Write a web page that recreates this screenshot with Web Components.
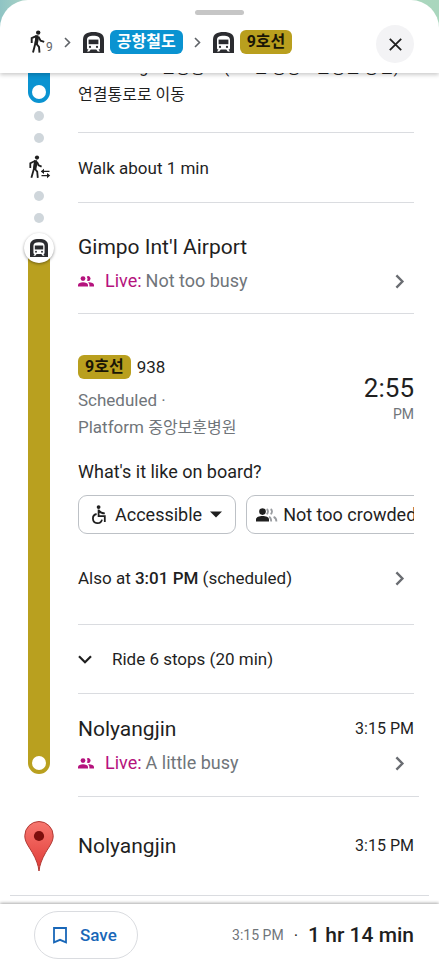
<!DOCTYPE html>
<html lang="en">
<head>
<meta charset="utf-8">
<meta name="viewport" content="width=device-width, initial-scale=1">
<title>Transit directions</title>
<style>
  html, body { margin: 0; height: 100%; }
  body {
    font-family: Roboto, "Noto Sans CJK KR", sans-serif;
    font-size: 17px;
    line-height: 27px;
    color: #1f1f1f;
    background: #fff;
  }
</style>
</head>
<body>
<trip-sheet>
  <route-header slot="header">
    <ui-icon name="walk"></ui-icon><small>9</small>
    <ui-icon class="sep" name="next"></ui-icon>
    <ui-icon name="train"></ui-icon><line-badge tone="blue">공항철도</line-badge>
    <ui-icon class="sep" name="next"></ui-icon>
    <ui-icon name="train"></ui-icon><line-badge>9호선</line-badge>
  </route-header>

  <trip-leg kind="transfer">
    <plain-step lang="ko">Go through 환승통로 (9호선 중앙보훈병원 방면)<br>연결통로로 이동</plain-step>
    <walk-step>Walk about 1 min</walk-step>
  </trip-leg>

  <trip-leg kind="ride">
    <station-stop name="Gimpo Int'l Airport" live="Not too busy"></station-stop>
    <departure-info number="938" status="Scheduled ·" platform="중앙보훈병원" time="2:55" half="PM" also="3:01 PM">
      <line-badge slot="badge">9호선</line-badge>
      <filter-chip slot="chips" icon="wheelchair">Accessible</filter-chip>
      <filter-chip slot="chips" icon="crowd">Not too crowded</filter-chip>
    </departure-info>
    <ride-stops>Ride 6 stops (20 min)</ride-stops>
    <station-stop name="Nolyangjin" live="A little busy" time="3:15 PM" last></station-stop>
  </trip-leg>

  <trip-leg kind="destination">
    <final-stop name="Nolyangjin" time="3:15 PM"></final-stop>
  </trip-leg>

  <trip-footer slot="footer" arrival="3:15 PM" total="1 hr 14 min"></trip-footer>
</trip-sheet>

<script>
const ICONS = {
  walk: [15, 24, `<circle cx="8.2" cy="2.6" r="2.2" fill="#1f1f1f"/><path d="M6.6 5.8 1.7 8.2V13M6.6 6.2 5.2 14.2M5.4 13.2 3 22.6M5.8 13.2l3.2 3.6.5 5.8M8.4 6.6l2.2 4 3.6 1.2" fill="none" stroke="#1f1f1f" stroke-width="1.9"/><path d="M5.6 5.2h2.8l.4 3.6-1 5.2H4.6z" fill="#1f1f1f"/>`],
  transfer: [22, 24, `<circle cx="9" cy="2.6" r="2.1" fill="#1f1f1f"/><path d="M7.4 5.8 2.3 8.2V13M7.2 6 5.8 14M6 13.4 3.4 22.8M6.4 13.2l2.8 3.4.6 6.2M9 6.8l1.6 3.4 3 1.4" fill="none" stroke="#1f1f1f" stroke-width="1.8"/><path d="M6.2 5.2h2.8l.4 3.6-1 5.2H5.2z" fill="#1f1f1f"/><path d="M21.5 16.4h-8M13.5 20.6h7" stroke="#1f1f1f" stroke-width="1.2"/><path d="m16 13.8-3.2 2.6 3.2 2.6zM19 18l3.2 2.6L19 23.2z" fill="#1f1f1f"/>`],
  train: [21, 21, `<path d="M0 21V7.5C0 2.2 4 0 10.5 0S21 2.2 21 7.5V21z" fill="#2b2c30"/><path d="M4 16V8c0-3 2.4-4.2 6.5-4.2S17 5 17 8v8c0 1-.6 1.6-1.5 1.6L17 19.5h-2.2l-1.500-1.900H7.700L6.200 19.500H4l1.500-1.900C4.600 17.600 4 17 4 16z" fill="#fff"/><path d="M5.600 7.600h9.800v4.600H5.600z" fill="#2b2c30"/><circle cx="7" cy="14.900" r="1.100" fill="#2b2c30"/><circle cx="14" cy="14.900" r="1.100" fill="#2b2c30"/>`],
  next: [7, 11, `<path d="m1 1 4.500 4.500L1 10" fill="none" stroke="#5f6368" stroke-width="1.600"/>`],
  right: [10, 15, `<path d="m1.400 1.400 6 6.100-6 6.100" fill="none" stroke="#6a6d72" stroke-width="2.400"/>`],
  down: [14, 9, `<path d="m1 1.200 6 6 6-6" fill="none" stroke="#1f1f1f" stroke-width="2.200"/>`],
  close: [13, 13, `<path d="m.8.800 11.400 11.400M12.200.800.800 12.200" stroke="#1f1f1f" stroke-width="1.800"/>`],
  people: [16, 11, `<g fill="#b5127d"><circle cx="5" cy="2.600" r="2.400"/><path d="M0 10.600V8.900C0 7.100 2.600 6.200 5 6.200s5 .9 5 2.700v1.700z"/><path d="M8.800.600a2.400 2.400 0 1 1 0 4 3.600 3.600 0 0 0 0-4zM11 6.300c2.400.100 5 1 5 2.600v1.700h-4.600V8.900c0-1-.6-1.900-1.400-2.500z"/></g>`],
  wheelchair: [15, 19, `<circle cx="6.600" cy="2.100" r="1.900" fill="#1f1f1f"/><path d="M6.600 4.500v6.700h6.200v5.800M6.800 5.600c1.500 2 3.400 2.800 6 2.800M4.600 9a4.600 4.600 0 1 0 5.400 5.600" fill="none" stroke="#1f1f1f" stroke-width="1.800"/>`],
  crowd: [22, 14, `<g fill="#1f1f1f"><circle cx="6.500" cy="3.600" r="3.300"/><path d="M0 13.600v-2.300C0 9 3.300 7.900 6.500 7.900S13 9 13 11.300v2.300z"/></g><g fill="none" stroke="#9a9da1" stroke-width="1.800"><path d="M10.600 1.100a2.900 2.900 0 0 1 0 5M14.600 1.100a2.900 2.900 0 0 1 0 5"/><path d="M13 8.800c1.600.800 2.200 1.800 2.200 4.600M17.600 8.800c1.900.800 2.800 1.800 2.800 4.600"/></g>`],
  caret: [12, 7, `<path d="M0 .500h12L6 6.500z" fill="#1f1f1f"/>`],
  bookmark: [14, 17, `<path d="M1 1h12v14.400l-6-2.600-6 2.600z" fill="none" stroke="#1967b8" stroke-width="1.800"/>`],
  pin: [30, 51, `<defs><linearGradient id="g" x1="0" y1="0" x2="0" y2="1"><stop offset="0" stop-color="#f7776f"/><stop offset="1" stop-color="#e03a36"/></linearGradient></defs><path d="M15 50c-.7-6-2.700-11.500-6.700-18.500C4.500 25 .8 20.900.8 14.700a14.200 14.200 0 0 1 28.400 0c0 6.200-3.700 10.300-7.500 16.800C17.700 38.500 15.700 44 15 50z" fill="url(#g)" stroke="#b13a35" stroke-width="1"/><circle cx="15" cy="15" r="5.100" fill="#7c0e0c"/>`]
};

const define = (name, render) => customElements.define(name, class extends HTMLElement {
  connectedCallback() {
    if (this.shadowRoot) return;
    const a = key => this.getAttribute(key) || '';
    this.attachShadow({ mode: 'open' }).innerHTML = render(a, this);
  }
});

const BUTTON = `button { font: inherit; color: inherit; text-align: left; background: none; border: 0; padding: 0; margin: 0; cursor: pointer; }`;

define('ui-icon', a => {
  const [w, h, body] = ICONS[a('name')];
  const size = a('size');
  return `<style>:host { display: inline-flex; flex: none; } svg { display: block; overflow: visible; }</style>
    <svg width="${size || w}" height="${size || h}" viewBox="0 0 ${w} ${h}" aria-hidden="true">${body}</svg>`;
});

define('line-badge', () => `<style>
  :host { display: inline-block; box-sizing: border-box; height: 24px; padding: 0 7px; border-radius: 6px; background: #b99f1e; color: #1a1606; font: bold 16px/24px Roboto, "Noto Sans CJK KR", sans-serif; white-space: nowrap; }
  :host([tone="blue"]) { background: #0a93d1; color: #fff; }
</style><slot></slot>`);

define('trip-sheet', () => `<style>
  :host { display: flex; flex-direction: column; height: 100vh; overflow: hidden; }
  main { flex: 1; min-height: 0; overflow-y: auto; scrollbar-width: none; }
  .end { height: 8px; }
</style>
<slot name="header"></slot><main><slot></slot><div class="end"></div></main><slot name="footer"></slot>`);

define('route-header', () => `<style>
  :host { display: block; flex: none; position: relative; z-index: 1; box-shadow: 0 2px 4px #0003; background: linear-gradient(90deg, #8fc4c4, #b4d8c6 8%, #a9d6bd); }
  header { background: #fff; border-radius: 28px 28px 0 0; padding: 10px 0; }
  .handle { width: 49px; height: 5px; margin: 0 auto 10px; border-radius: 3px; background: #c6c6c6; }
  .row { display: flex; align-items: center; padding: 0 25px 0 30px; }
  nav { flex: 1; min-width: 0; height: 34px; display: flex; align-items: center; padding-bottom: 4px; }
  ::slotted(small) { font-size: 12px; line-height: 12px; color: #5f6368; padding: 10px 0 0 1px; }
  ::slotted(.sep) { margin: 0 12px 0 11px; }
  ::slotted(line-badge) { margin-left: 6px; }
  ${BUTTON}
  button { width: 38px; height: 38px; border-radius: 50%; background: #f3f3f5; display: grid; place-items: center; }
</style>
<header><div class="handle"></div><div class="row"><nav aria-label="Route"><slot></slot></nav>
<button aria-label="Close"><ui-icon name="close"></ui-icon></button></div></header>`);

define('trip-leg', a => {
  const dot = '<i class="dot"></i>';
  const rail = {
    transfer: `<div class="bar blue"><i class="ring"></i></div>${dot}${dot}<ui-icon name="transfer"></ui-icon>${dot}${dot}`,
    ride: `<div class="stop"><ui-icon name="train" size="18"></ui-icon></div><div class="bar"><i class="ring"></i></div>`,
    destination: `<ui-icon name="pin"></ui-icon>`
  }[a('kind')];
  return `<style>
  :host { display: grid; grid-template-columns: 78px minmax(0, 1fr); }
  .rail { display: flex; flex-direction: column; align-items: center; }
  .steps { padding-right: 25px; }
  .bar { flex: 1; box-sizing: border-box; width: 22px; background: #b9a01f; border-radius: 0 0 11px 11px; display: flex; align-items: flex-end; justify-content: center; padding-bottom: 4px; }
  .blue { background: #0a93d1; }
  .ring { width: 14px; height: 14px; border-radius: 50%; background: #fff; }
  .dot { width: 10px; height: 10px; border-radius: 50%; background: #cfd6db; }
  .stop { display: grid; place-items: center; width: 30px; height: 30px; border-radius: 50%; background: #fff; box-shadow: 0 1px 3px #0006; z-index: 0; }
  :host([kind="transfer"]) .rail { gap: 12px; padding-bottom: 10px; }
  :host([kind="transfer"]) .steps { padding-bottom: 30px; }
  :host([kind="transfer"]) .bar { margin-bottom: -4px; }
  :host([kind="ride"]) .rail { padding-bottom: 23px; }
  :host([kind="ride"]) .bar { margin-top: -15px; }
  :host([kind="destination"]) { border-bottom: 1px solid #dadce0; margin: 0 10px; grid-template-columns: 68px minmax(0, 1fr); }
  :host([kind="destination"]) .rail { justify-content: center; padding-right: 10px; }
  :host([kind="destination"]) .steps { padding-right: 10px; }
</style><div class="rail">${rail}</div><div class="steps"><slot></slot></div>`;
});

define('plain-step', () => `<style>
  :host { display: block; padding: 20px 0 24px; font-size: 16px; border-bottom: 1px solid #dadce0; }
</style><slot></slot>`);

define('walk-step', () => `<style>
  :host { display: block; padding: 22px 0 20px; border-bottom: 1px solid #dadce0; }
</style><slot></slot>`);

define('station-stop', (a) => `<style>
  :host { display: block; padding-bottom: 20px; border-bottom: 1px solid #dadce0; }
  :host([last]) { padding-top: 21px; padding-bottom: 21px; border-color: transparent; }
  .title { display: flex; justify-content: space-between; align-items: center; gap: 12px; line-height: 28px; margin-bottom: 8px; }
  h2 { font-size: 21px; font-weight: 400; margin: 0; }
  time { font-size: 16px; }
  ${BUTTON}
  button { display: flex; align-items: center; width: 100%; line-height: 24px; padding-right: 9px; font-size: 18px; color: #70757a; }
  b { font-weight: 400; color: #b5127d; margin: 0 4px 0 11px; }
  .go { margin-left: auto; }
</style>
<div class="title"><h2>${a('name')}</h2>${a('time') ? `<time>${a('time')}</time>` : ''}</div>
<button><ui-icon name="people"></ui-icon><b>Live:</b><span>${a('live')}</span><ui-icon class="go" name="right"></ui-icon></button>`);

define('filter-chip', a => `<style>
  :host { display: block; flex: none; }
  ${BUTTON}
  button { box-sizing: border-box; display: flex; align-items: center; height: 39px; padding: 0 13px; border: 1px solid #bdc1c6; border-radius: 9px; font-size: 18px; white-space: nowrap; }
  .label { margin: 0 8px; }
  :host([icon="crowd"]) button { padding-left: 9px; }
  :host([icon="crowd"]) .label { margin-left: 5px; }
</style><button aria-haspopup="true"><ui-icon name="${a('icon')}"></ui-icon><span class="label"><slot></slot></span><ui-icon name="caret"></ui-icon></button>`);

define('departure-info', a => `<style>
  :host { display: block; padding-top: 41px; border-bottom: 1px solid #dadce0; }
  .top { display: flex; justify-content: space-between; gap: 12px; }
  .line { display: flex; align-items: center; gap: 6px; height: 24px; margin-bottom: 8px; }
  .sub { font-size: 17px; color: #70757a; }
  .ko { font-size: 16px; }
  .when { text-align: right; padding-top: 17px; color: #70757a; font-size: 14px; line-height: 20px; }
  .when time { display: block; font-size: 26px; line-height: 32px; color: #1f1f1f; }
  .ask { margin: 19px 0 11px; font-size: 18px; line-height: 24px; }
  .chips { display: flex; gap: 10px; overflow-x: auto; scrollbar-width: none; }
  ${BUTTON}
  .also { display: flex; align-items: center; justify-content: space-between; width: 100%; padding: 31px 9px 32px 0; }
  .also b { font-weight: 500; }
</style>
<div class="top"><div><div class="line"><slot name="badge"></slot><span>${a('number')}</span></div>
<div class="sub">${a('status')}<br>Platform <span class="ko" lang="ko">${a('platform')}</span></div></div>
<div class="when"><time>${a('time')}</time>${a('half')}</div></div>
<div class="ask">What's it like on board?</div>
<div class="chips"><slot name="chips"></slot></div>
<button class="also"><span>Also at <b>${a('also')}</b> (scheduled)</span><ui-icon name="right"></ui-icon></button>`);

define('ride-stops', () => `<style>
  :host { display: block; border-bottom: 1px solid #dadce0; }
  ${BUTTON}
  button { display: flex; align-items: center; gap: 20px; width: 100%; line-height: 28px; padding: 20px 0; }
</style><button aria-expanded="false"><ui-icon name="down"></ui-icon><span><slot></slot></span></button>`);

define('final-stop', a => `<style>
  :host { display: flex; justify-content: space-between; align-items: center; gap: 12px; padding: 35px 5px 35px 0; line-height: 28px; border-top: 1px solid #dadce0; margin-top: -1px; }
  h2 { font-size: 21px; font-weight: 400; margin: 0; }
  time { font-size: 16px; }
</style><h2>${a('name')}</h2><time>${a('time')}</time>`);

define('trip-footer', a => `<style>
  :host { display: flex; align-items: center; flex: none; position: relative; z-index: 1; background: #fff; padding: 7px 25px 1px 34px; box-shadow: 0 -1px 3px #0005; }
  ${BUTTON}
  button { box-sizing: border-box; display: flex; align-items: center; gap: 13px; height: 48px; padding: 0 20px 0 18px; border: 1px solid #dadce0; border-radius: 24px; color: #1967b8; font-weight: 500; }
  .arrive { margin-left: auto; font-size: 14px; color: #70757a; }
  .mid { margin: 0 10px; }
  strong { font-size: 21px; font-weight: 500; }
</style>
<button><ui-icon name="bookmark"></ui-icon>Save</button>
<time class="arrive">${a('arrival')}</time><span class="mid">·</span><strong>${a('total')}</strong>`);

/* The sheet opens scrolled to the end of the trip. */
const list = document.querySelector('trip-sheet').shadowRoot.querySelector('main');
list.scrollTop = list.scrollHeight;
</script>
</body>
</html>
